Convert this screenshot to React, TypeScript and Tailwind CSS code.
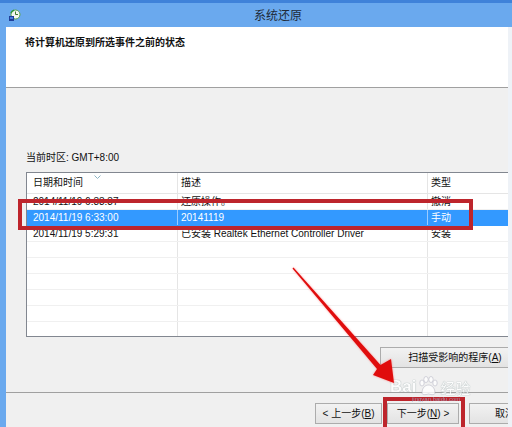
import React from "react";

const rows = [
  { d: "2014/11/19 6:33:37", desc: "还原操作。", t: "撤消", sel: false },
  { d: "2014/11/19 6:33:00", desc: "20141119", t: "手动", sel: true },
  { d: "2014/11/19 5:29:31", desc: "已安装 Realtek Ethernet Controller Driver", t: "安装", sel: false },
];

function Btn({ children, className = "" }: { children: React.ReactNode; className?: string }) {
  return (
    <div
      className={`h-[21px] flex items-center justify-center border border-[#acacac] bg-gradient-to-b from-[#f2f2f2] to-[#e3e3e3] text-[10px] leading-[12px] text-[#111] shrink-0 ${className}`}
    >
      {children}
    </div>
  );
}

export default function App() {
  const empty = Array.from({ length: 6 });
  return (
    <div className="relative w-[512px] h-[427px] overflow-hidden bg-[#6aa9ee] font-['Liberation_Sans','Noto_Sans_CJK_SC',sans-serif] text-[10px] text-black">
      <div className="h-[3px] bg-[#3f82d9]" />
      <div className="h-[24px] flex items-center">
        <svg width="13" height="13" viewBox="0 0 13 13" className="ml-[8px] shrink-0">
          <circle cx="7.5" cy="5.5" r="4.5" fill="#f4f8f0" stroke="#5aa34a" strokeWidth="1" />
          <path d="M7.5 2.5 V5.5 H10" stroke="#3c7a2e" strokeWidth="1" fill="none" />
          <path d="M3 4 A4.5 4.5 0 0 1 6 1.2" stroke="#2f9a3a" strokeWidth="1.6" fill="none" />
          <rect x="1" y="7" width="5" height="5" fill="#1f3f9a" />
          <rect x="2" y="8" width="3" height="2" fill="#4a7fe0" />
        </svg>
        <span className="ml-[233px] text-[12px] leading-[14px] text-[#1e2a38] font-['Noto_Sans_CJK_SC',sans-serif]">
          系统还原
        </span>
      </div>

      <div className="flex h-[400px]">
        <div className="w-[6px] shrink-0" />
        <div className="w-[502px] shrink-0 flex flex-col overflow-hidden">
          <div className="h-[61px] shrink-0 bg-white border-b border-[#a0a0a0] pl-[19px] pt-[10px]">
            <div className="font-bold text-[10px] leading-[12px] text-[#111]">将计算机还原到所选事件之前的状态</div>
          </div>

          <div className="flex-1 bg-[#f0f0f0] flex flex-col">
            <div className="pl-[20px] pt-[64px] leading-[12px] text-[#111]">当前时区: GMT+8:00</div>

            <div className="ml-[20px] mt-[8px] w-[520px] h-[165px] shrink-0 border border-[#828790] bg-white overflow-hidden">
              <div className="h-[21px] flex border-b border-[#e5e5e5] text-[#111] leading-[12px]">
                <div className="relative w-[151px] shrink-0 border-r border-[#e5e5e5] pl-[6px] flex items-center">
                  日期和时间
                  <svg width="7" height="4" viewBox="0 0 7 4" className="absolute left-[67px] top-[2px]">
                    <path d="M0.5 0.5 L3.5 3.5 L6.5 0.5" stroke="#8db4c4" strokeWidth="1" fill="none" />
                  </svg>
                </div>
                <div className="w-[250px] shrink-0 border-r border-[#e5e5e5] pl-[3px] flex items-center">描述</div>
                <div className="flex-1 pl-[3px] flex items-center">类型</div>
              </div>
              {rows.map((r, i) => (
                <div
                  key={i}
                  className={`h-[16px] flex leading-[12px] border-b ${
                    r.sel ? "bg-[#3399ff] text-white border-[#3399ff]" : "text-[#111] border-[#f0f0f0]"
                  }`}
                >
                  <div className={`w-[151px] shrink-0 border-r pl-[6px] flex items-center ${r.sel ? "border-[#9ccbff]" : "border-[#e5e5e5]"}`}>
                    {r.d}
                  </div>
                  <div className={`w-[250px] shrink-0 border-r pl-[3px] flex items-center whitespace-nowrap ${r.sel ? "border-[#9ccbff]" : "border-[#e5e5e5]"}`}>
                    {r.desc}
                  </div>
                  <div className="flex-1 pl-[3px] flex items-center">{r.t}</div>
                </div>
              ))}
              {empty.map((_, i) => (
                <div key={i} className="h-[16px] flex border-b border-[#f0f0f0]">
                  <div className="w-[151px] shrink-0 border-r border-[#e5e5e5]" />
                  <div className="w-[250px] shrink-0 border-r border-[#e5e5e5]" />
                  <div className="flex-1" />
                </div>
              ))}
            </div>

            <Btn className="ml-[374px] mt-[10px] w-[150px] h-[20px]">
              <span>
                扫描受影响的程序(<span className="underline">A</span>)
              </span>
            </Btn>

            <div className="mt-[24px] border-t border-[#a0a0a0] h-px shrink-0" />

            <div className="flex mt-[10px]">
              <Btn className="ml-[309px] w-[67px]">
                <span>
                  &lt; 上一步(<span className="underline">B</span>)
                </span>
              </Btn>
              <Btn className="ml-[5px] w-[72px] border-[#3c7fb1]">
                <span>
                  下一步(<span className="underline">N</span>) &gt;
                </span>
              </Btn>
              <Btn className="ml-[10px] w-[72px]">
                <span>取消</span>
              </Btn>
            </div>
          </div>
        </div>
        <div className="w-[4px] shrink-0 bg-[#eef2f7]" />
      </div>

      {/* annotations */}
      <div className="absolute left-[18px] top-[199px] w-[455px] h-[31px] border-[4px] border-[#bd252c] pointer-events-none" />
      <div className="absolute left-[383px] top-[397px] w-[82px] h-[34px] border-[4px] border-[#bd252c] pointer-events-none" />

      <div className="absolute left-[390px] top-[376px] flex items-end pointer-events-none opacity-80">
        <span className="text-[17px] leading-[18px] font-bold text-white font-['Liberation_Sans',sans-serif] [text-shadow:0_0_1px_#9aa,0_0_1px_#9aa]">
          Bai
        </span>
        <svg width="22" height="20" viewBox="0 0 22 20" className="mx-[1px]">
          <g fill="white" stroke="#aab" strokeWidth="0.6">
            <ellipse cx="5" cy="7" rx="2.2" ry="3" />
            <ellipse cx="9" cy="3.5" rx="2.2" ry="3" />
            <ellipse cx="14" cy="3.5" rx="2.2" ry="3" />
            <ellipse cx="18" cy="7" rx="2.2" ry="3" />
            <path d="M5 17 C5 11 9 9 11.5 9 C14 9 18 11 18 17 C18 19 15 19 11.5 18 C8 19 5 19 5 17Z" />
          </g>
        </svg>
        <span className="text-[15px] leading-[17px] text-white font-['Noto_Sans_CJK_SC',sans-serif] [text-shadow:0_0_1px_#9aa,0_0_1px_#9aa]">
          经验
        </span>
      </div>
      <div className="absolute left-[412px] top-[396px] text-[6px] leading-[7px] text-[#9db8d8] opacity-70 font-['Liberation_Sans',sans-serif] pointer-events-none">
        jingyan.baidu.com
      </div>

      <svg className="absolute inset-0 pointer-events-none" width="512" height="427" viewBox="0 0 512 427">
        <defs>
          <filter id="glow" x="-20%" y="-20%" width="140%" height="140%">
            <feGaussianBlur stdDeviation="1" />
          </filter>
        </defs>
        <polygon
          points="293.5,267.5 380.5,365 391,359 394,383 373,375 377,369 292.5,268.5"
          fill="#ff4040"
          opacity="0.5"
          filter="url(#glow)"
        />
        <polygon points="293.5,267.5 380.5,365 391,359 394,383 373,375 377,369 292.5,268.5" fill="#e00d0d" />
      </svg>
    </div>
  );
}
